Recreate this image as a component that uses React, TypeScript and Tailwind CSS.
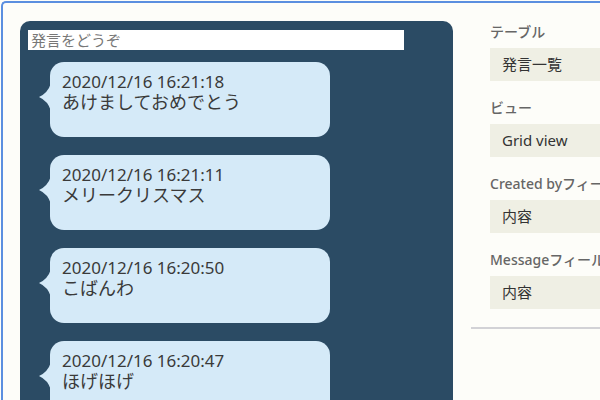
const messages = [
  { at: '2020/12/16 16:21:18', text: 'あけましておめでとう' },
  { at: '2020/12/16 16:21:11', text: 'メリークリスマス' },
  { at: '2020/12/16 16:20:50', text: 'こばんわ' },
  { at: '2020/12/16 16:20:47', text: 'ほげほげ' },
];

const fields = [
  { label: 'テーブル', value: '発言一覧' },
  { label: 'ビュー', value: 'Grid view' },
  { label: 'Created byフィールド', value: '内容' },
  { label: 'Messageフィールド', value: '内容' },
];

const font = 'font-["Noto_Sans","Noto_Sans_CJK_JP",sans-serif]';

function Bubble({ at, text }: { at: string; text: string }) {
  return (
    <div className="relative ml-[22px] h-[75px] w-[280px] rounded-[14px] bg-[#d5eaf8] px-3 pt-[10px] text-[#3a3a3a]">
      {/* left tail */}
      <svg
        className="absolute left-[-11px] top-[21px]"
        width="12"
        height="28"
        viewBox="0 0 12 28"
      >
        <path d="M12 0 Q9 10 0 14 Q9 18 12 28 Z" fill="#d5eaf8" />
      </svg>
      <div className="text-[17px] leading-[20px]">{at}</div>
      <div className="text-[18px] leading-[21px]">{text}</div>
    </div>
  );
}

export default function App() {
  return (
    <div className={`h-[400px] w-[600px] overflow-hidden bg-[#fdfdf9] ${font}`}>
      <div className="ml-[1px] mt-[1px] h-[420px] w-[620px] rounded-tl-[5px] border-l-2 border-t-2 border-[#5b8fe0] bg-[#fdfdf9] pl-[17px] pt-[18px]">
        <div className="flex items-start">
          {/* chat panel */}
          <div className="h-[420px] w-[433px] shrink-0 rounded-t-[10px] bg-[#2b4b64] pl-2 pt-[9px]">
            <div className="flex h-[20px] w-[376px] items-center bg-white px-[3px] text-[15px] text-[#777]">
              発言をどうぞ
            </div>
            <div className="mt-[12px] flex flex-col gap-[18px]">
              {messages.map((m) => (
                <Bubble key={m.at} at={m.at} text={m.text} />
              ))}
            </div>
          </div>

          {/* settings panel */}
          <div className="ml-[18px] flex w-[200px] shrink-0 flex-col pt-[1px]">
            {fields.map((f) => (
              <div key={f.label} className="mb-[17px] pl-[19px]">
                <div className="h-[20px] whitespace-nowrap text-[14px] font-medium leading-[20px] text-[#666]">
                  {f.label}
                </div>
                <div className="mt-[6px] flex h-[33px] items-center bg-[#efefe4] px-3 text-[15px] text-[#333]">
                  {f.value}
                </div>
              </div>
            ))}
            <div className="mt-[1px] border-t-2 border-[#d2d2d6]" />
          </div>
        </div>
      </div>
    </div>
  );
}
